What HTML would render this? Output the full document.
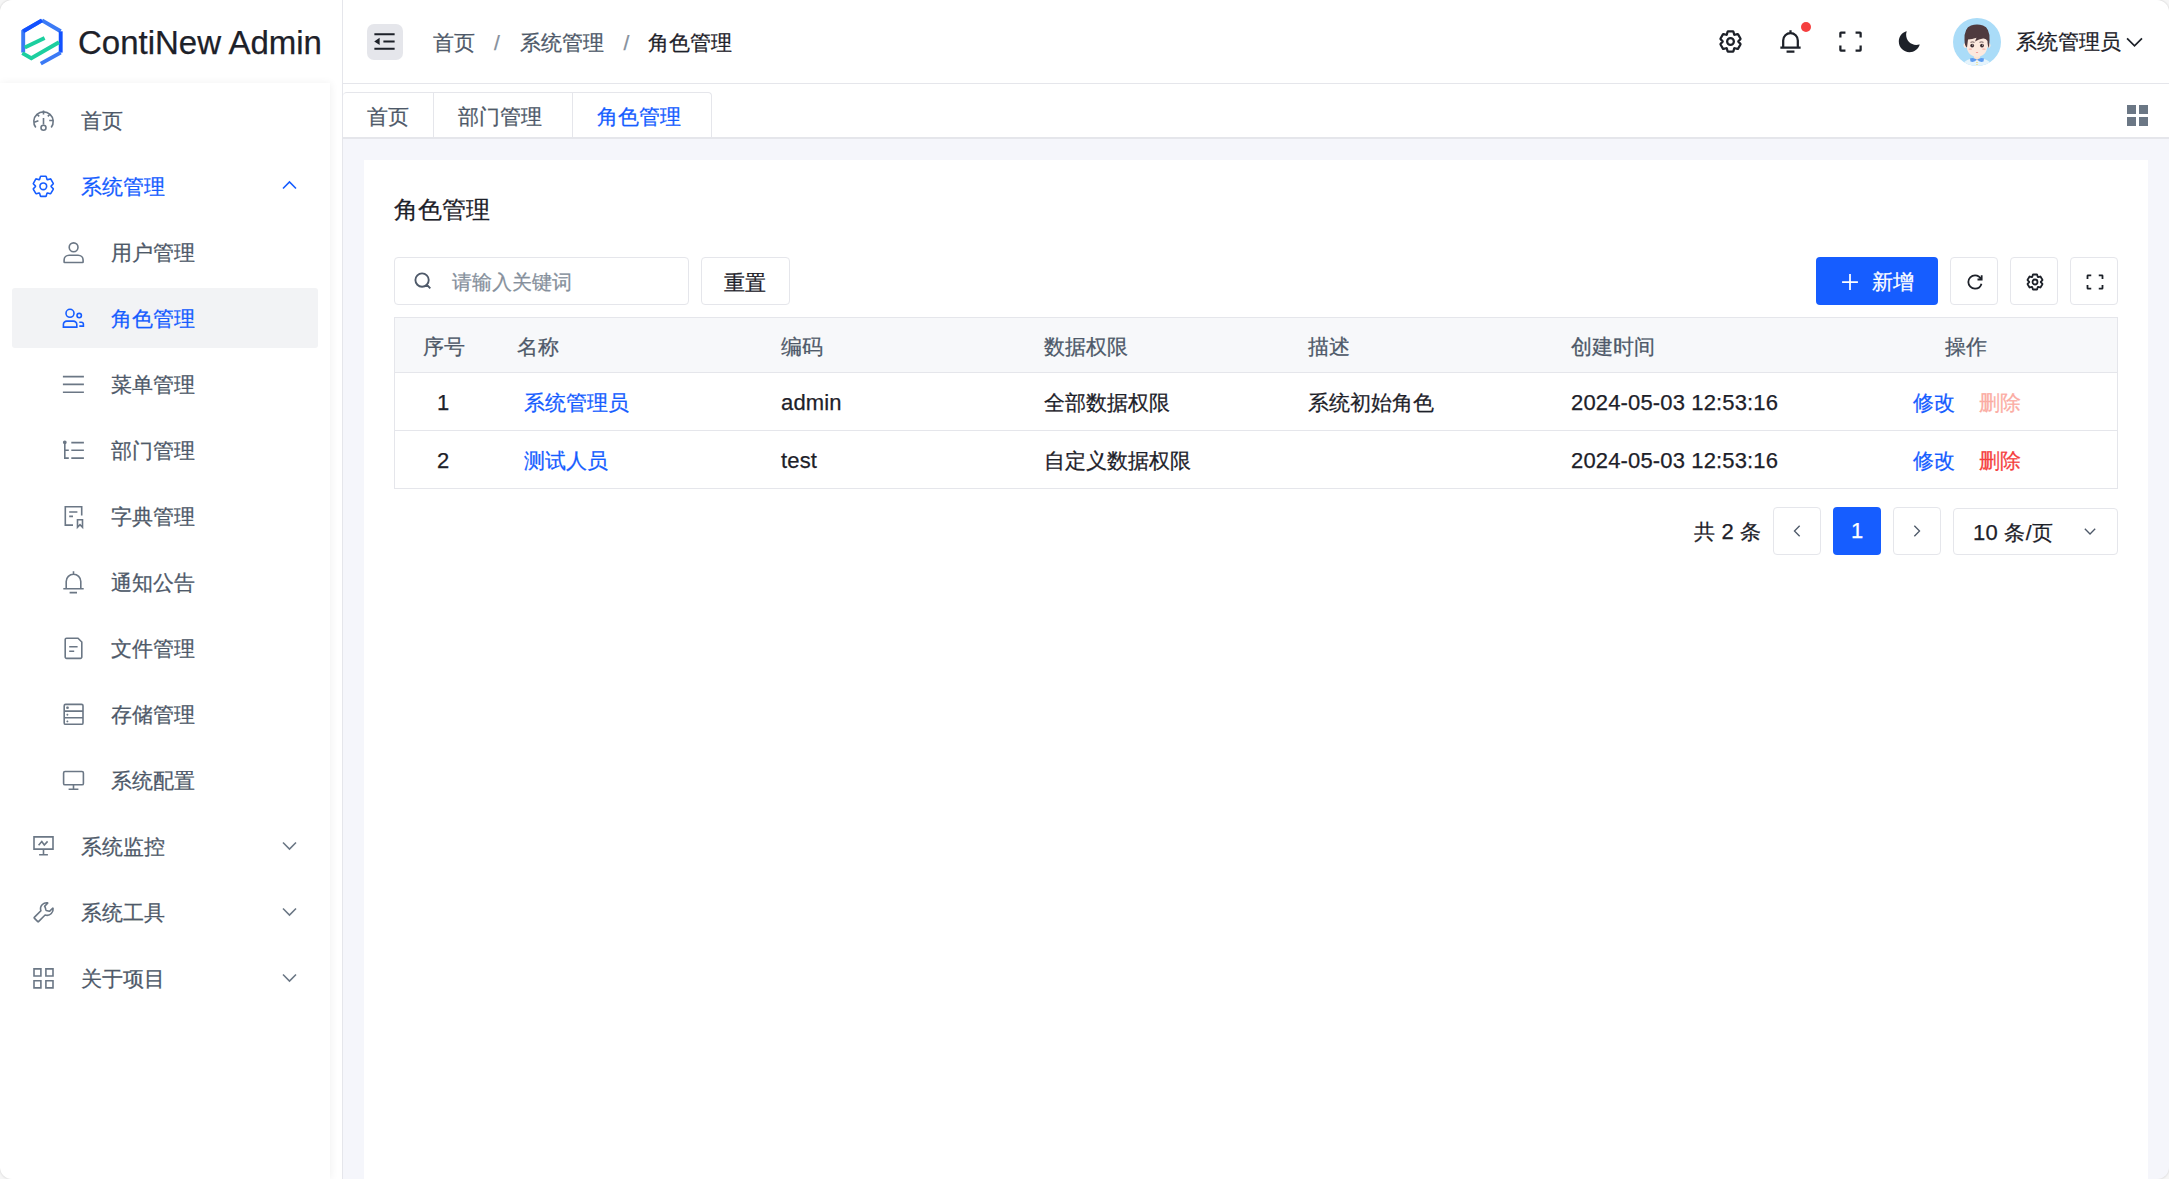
<!DOCTYPE html>
<html><head><meta charset="utf-8">
<style>
*{box-sizing:border-box;margin:0;padding:0}
html,body{width:2169px;height:1179px;overflow:hidden;background:#fff}
body{font-family:"Liberation Sans",sans-serif;font-size:21px;color:#1d2129;position:relative;-webkit-text-stroke:0.25px currentColor}
.abs{position:absolute}
svg{display:block}
.ic{fill:none;stroke:currentColor;stroke-width:4}
/* header */
#side{left:0;top:0;width:343px;height:1179px;background:#fff;border-right:1px solid #e5e6eb}
#sidemenu{left:0;top:83px;width:330px;height:1096px;background:#fff;box-shadow:1px 0 8px rgba(0,0,0,0.06)}
#logo-text{left:78px;top:20px;font-size:33px;line-height:46px;color:#1d2129;white-space:nowrap}
#hdr{left:343px;top:0;width:1826px;height:84px;border-bottom:1px solid #e5e6eb;background:#fff}
#fold{left:367px;top:24px;width:36px;height:36px;border-radius:7px;background:#e5e6eb;color:#1d2129}
.bc{top:28px;line-height:30px;white-space:nowrap;color:#4e5969}
.sep{color:#86909c}
/* tabs */
#tabs{left:343px;top:92px;width:1826px;height:47px;border-bottom:2px solid #e5e6eb;background:#fff}
.tab{top:92px;height:46px;border-top:1px solid #e5e6eb;border-right:1px solid #e5e6eb;line-height:48px;color:#4e5969;text-align:center}
#content{left:343px;top:139px;width:1826px;height:1040px;background:#f5f6fb}
#card{left:364px;top:160px;width:1784px;height:1100px;background:#fff}
.menu-item{left:12px;width:306px;height:60px;line-height:60px;color:#4e5969;white-space:nowrap}
.mt{line-height:30px;white-space:nowrap;color:#4e5969;font-size:21px}
.sel{background:#f2f3f5;border-radius:3px;color:#165dff}
.td.blue,.blue{color:#165dff}
.btn{border:1px solid #e5e6eb;border-radius:4px;background:#fff}
.th{top:333px;line-height:28px;color:#4e5969;white-space:nowrap}
.td{line-height:28px;color:#1d2129;white-space:nowrap}
.lat{font-size:22px;letter-spacing:0.15px}
#frame{position:absolute;left:0;top:0;width:2169px;height:1179px;border-radius:12px;box-shadow:0 0 1.5px 1px rgba(0,0,0,0.08),0 0 0 40px #f6f6f6;pointer-events:none;z-index:10}
</style></head><body>
<!-- sidebar -->
<div id="side" class="abs"></div>
<div id="sidemenu" class="abs"></div>
<svg class="abs" style="left:0;top:0" width="80" height="80" viewBox="0 0 80 80">
  <g fill="none" stroke-width="3.9" stroke-linejoin="miter">
  <path d="M23.2 52.6 V31.3 L42 20.4" stroke="#3b7af5"/>
  <path d="M42 20.4 L60.7 31.3" stroke="#3b7af5"/>
  <path d="M23.2 31.3 L42 20.4" stroke="#1251ff"/>
  <path d="M60.7 31.3 V52.6" stroke="#1251ff"/>
  <path d="M60.7 52.6 L40.8 63.6" stroke="#3b7af5"/>
  <path d="M22.3 53.1 L31.3 58.2 L59 42.3" stroke="#1ccf9f"/>
  <path d="M24.8 47.6 L44.6 37.9" stroke="#1ccf9f"/>
  </g>
</svg>
<div id="logo-text" class="abs">ContiNew Admin</div>

<!-- header -->
<div id="hdr" class="abs"></div>
<div id="fold" class="abs">
  <svg class="abs" style="left:4px;top:3.5px" width="27" height="27" viewBox="0 0 48 48"><path class="ic" style="stroke-width:3.4" d="M42 11H6M42 24H22M42 37H6"/><path d="M13.66 26.912l-4.82-3.118 4.82-3.118v6.236Z" fill="currentColor" stroke="currentColor" stroke-width="3.4"/></svg>
</div>
<div class="abs bc" style="left:433px">首页</div>
<div class="abs bc sep" style="left:494px">/</div>
<div class="abs bc" style="left:520px">系统管理</div>
<div class="abs bc sep" style="left:623.5px">/</div>
<div class="abs bc" style="left:648px;color:#1d2129">角色管理</div>

<!-- header right icons -->
<svg class="abs" style="left:1717px;top:28px;color:#1d2129" width="27" height="27" viewBox="0 0 48 48"><path class="ic" d="M18.797 6.732A1 1 0 0 1 19.76 6h8.48a1 1 0 0 1 .964.732l1.285 4.628a1 1 0 0 0 1.213.7l4.651-1.2a1 1 0 0 1 1.116.468l4.24 7.344a1 1 0 0 1-.153 1.2L38.193 23.3a1 1 0 0 0 0 1.402l3.364 3.427a1 1 0 0 1 .153 1.2l-4.24 7.344a1 1 0 0 1-1.116.468l-4.65-1.2a1 1 0 0 0-1.214.7l-1.285 4.628a1 1 0 0 1-.964.732h-8.48a1 1 0 0 1-.963-.732L17.51 36.64a1 1 0 0 0-1.213-.7l-4.65 1.2a1 1 0 0 1-1.116-.468l-4.24-7.344a1 1 0 0 1 .153-1.2L9.809 24.7a1 1 0 0 0 0-1.402l-3.364-3.427a1 1 0 0 1-.153-1.2l4.24-7.344a1 1 0 0 1 1.116-.468l4.65 1.2a1 1 0 0 0 1.213-.7l1.286-4.628Z"/><path class="ic" d="M30 24a6 6 0 1 1-12 0 6 6 0 0 1 12 0Z"/></svg>
<svg class="abs" style="left:1777px;top:28px;color:#1d2129" width="27" height="27" viewBox="0 0 48 48"><path class="ic" d="M24 9c7.18 0 13 5.82 13 13v13H11V22c0-7.18 5.82-13 13-13Zm0 0V4M6 35h36m-25 7h14"/></svg>
<div class="abs" style="left:1801px;top:22px;width:10px;height:10px;border-radius:5px;background:#f53f3f"></div>
<svg class="abs" style="left:1837px;top:28px;color:#1d2129" width="27" height="27" viewBox="0 0 48 48"><path class="ic" d="M42 17V9a1 1 0 0 0-1-1h-8M6 17V9a1 1 0 0 1 1-1h8m27 23v8a1 1 0 0 1-1 1h-8M6 31v8a1 1 0 0 0 1 1h8"/></svg>
<svg class="abs" style="left:1896px;top:28px;color:#1d2129" width="27" height="27" viewBox="0 0 48 48"><path fill="currentColor" d="M42.108 29.769c.124-.387-.258-.736-.645-.613A17.99 17.99 0 0 1 36 30c-9.941 0-18-8.059-18-18 0-1.904.296-3.74.844-5.463.123-.387-.226-.768-.613-.645C10.558 8.334 5 15.518 5 24c0 10.493 8.507 19 19 19 8.482 0 15.666-5.558 18.108-13.231Z"/></svg>
<!-- avatar -->
<svg class="abs" style="left:1953px;top:18px" width="48" height="48" viewBox="0 0 48 48">
  <defs><clipPath id="cc"><circle cx="24" cy="24" r="24"/></clipPath></defs>
  <circle cx="24" cy="24" r="24" fill="#aadcf8"/>
  <g clip-path="url(#cc)">
    <path d="M8 50 Q10 43 17 41 L31 41 Q38 43 40 50Z" fill="#e6f4fc"/>
    <path d="M21 38 L27 38 L27 41 L24 43 L21 41Z" fill="#fde3cf"/>
    <path d="M17 40.5 Q20 39 24 41.5 Q21 45 17.5 43.5Z M31 40.5 Q28 39 24 41.5 Q27 45 30.5 43.5Z" fill="#5d9cf0"/>
    <circle cx="24" cy="44.5" r="0.6" fill="#f5d040"/><circle cx="24" cy="46.5" r="0.6" fill="#f5d040"/>
    <ellipse cx="12.3" cy="27.5" rx="1.8" ry="2.4" fill="#fde9de"/>
    <ellipse cx="35.7" cy="27.5" rx="1.8" ry="2.4" fill="#fde9de"/>
    <path d="M13 17 L13 22 Q13 34 18 37 Q21 39 24 39 Q27 39 30 37 Q35 34 35 22 L35 17Z" fill="#fde9de"/>
    <path d="M11.5 22 Q11 10 18 7.5 Q24 5.5 30 7.5 Q37 10 36.5 22 L36 30 Q34.5 28 34.5 23 Q33 20 30 20.5 Q26 21 22 23.5 Q23 21 23.5 19.8 Q19 21.5 15 21.5 L14 29.5 Q11.5 28 11.5 22Z" fill="#4f3a3e"/>
    <path d="M17.5 24.3 Q19.5 23.5 21.5 24.3 M26.5 24.3 Q28.5 23.5 30.5 24.3" stroke="#4f3a3e" stroke-width="0.8" fill="none"/>
    <circle cx="19.2" cy="27.6" r="1.9" fill="#3d2c30"/><circle cx="29" cy="27.6" r="1.9" fill="#3d2c30"/>
    <circle cx="19.7" cy="27.1" r="0.5" fill="#fff"/><circle cx="29.5" cy="27.1" r="0.5" fill="#fff"/>
    <ellipse cx="17.3" cy="31.2" rx="1.7" ry="0.9" fill="#f6b8b0" opacity="0.8"/>
    <ellipse cx="30.9" cy="31.2" rx="1.7" ry="0.9" fill="#f6b8b0" opacity="0.8"/>
    <path d="M22.6 34.2 Q24 35.6 25.4 34.2Z" fill="#ee6a6a"/>
  </g>
</svg>
<div class="abs" style="left:2016px;top:27px;line-height:30px;color:#1d2129;white-space:nowrap">系统管理员</div>
<svg class="abs" style="left:2123px;top:30px;color:#1d2129" width="23" height="23" viewBox="0 0 48 48"><path class="ic" style="stroke-width:3.6" d="M39.6 17.443 24.043 33 8.487 17.443"/></svg>

<!-- tabs -->
<div id="tabs" class="abs"></div>
<div class="abs tab" style="left:343px;width:91px;border-top-left-radius:4px">首页</div>
<div class="abs tab" style="left:433px;width:140px;text-indent:-5px">部门管理</div>
<div class="abs tab" style="left:572px;width:140px;color:#165dff;text-indent:-6px;border-top-right-radius:4px">角色管理</div>
<svg class="abs" style="left:2127px;top:105px" width="21" height="21" viewBox="0 0 21 21"><g fill="#6b7785"><rect x="0" y="0" width="9" height="9"/><rect x="12" y="0" width="9" height="9"/><rect x="0" y="12" width="9" height="9"/><rect x="12" y="12" width="9" height="9"/></g></svg>

<!-- content -->
<div id="content" class="abs"></div>
<div id="card" class="abs"></div>
<div class="abs" style="left:394px;top:193px;font-size:24px;line-height:34px;color:#1d2129">角色管理</div>

<!-- toolbar -->
<div class="abs btn" style="left:394px;top:257px;width:295px;height:48px"></div>
<svg class="abs" style="left:413px;top:271px;color:#4e5969" width="20" height="20" viewBox="0 0 48 48"><path class="ic" style="stroke-width:4.5" d="M33.072 33.071c6.248-6.248 6.248-16.379 0-22.627-6.249-6.249-16.38-6.249-22.628 0-6.248 6.248-6.248 16.379 0 22.627 6.248 6.248 16.38 6.248 22.628 0Zm0 0 8.485 8.485"/></svg>
<div class="abs" style="left:452px;top:267px;line-height:30px;color:#86909c;font-size:19.6px">请输入关键词</div>
<div class="abs btn" style="left:701px;top:257px;width:89px;height:48px"></div>
<div class="abs" style="left:724px;top:268px;line-height:30px;color:#1d2129">重置</div>

<div class="abs" style="left:1816px;top:257px;width:122px;height:48px;background:#165dff;border-radius:4px"></div>
<svg class="abs" style="left:1840px;top:272px;color:#fff" width="20" height="20" viewBox="0 0 48 48"><path class="ic" style="stroke-width:4.2" d="M5 24h38M24 5v38"/></svg>
<div class="abs" style="left:1872px;top:267px;line-height:30px;color:#fff">新增</div>
<div class="abs btn" style="left:1950px;top:257px;width:48px;height:48px"></div>
<svg class="abs" style="left:1965px;top:272px;color:#1d2129" width="20" height="20" viewBox="0 0 48 48"><path class="ic" style="stroke-width:4.3" d="M38.837 18C36.463 12.136 30.715 8 24 8 15.163 8 8 15.163 8 24s7.163 16 16 16c7.455 0 13.72-5.1 15.496-12M40 8v10H30"/></svg>
<div class="abs btn" style="left:2010px;top:257px;width:48px;height:48px"></div>
<svg class="abs" style="left:2024.5px;top:272px;color:#1d2129" width="20" height="20" viewBox="0 0 48 48"><path class="ic" style="stroke-width:4.3" d="M18.797 6.732A1 1 0 0 1 19.76 6h8.48a1 1 0 0 1 .964.732l1.285 4.628a1 1 0 0 0 1.213.7l4.651-1.2a1 1 0 0 1 1.116.468l4.24 7.344a1 1 0 0 1-.153 1.2L38.193 23.3a1 1 0 0 0 0 1.402l3.364 3.427a1 1 0 0 1 .153 1.2l-4.24 7.344a1 1 0 0 1-1.116.468l-4.65-1.2a1 1 0 0 0-1.214.7l-1.285 4.628a1 1 0 0 1-.964.732h-8.48a1 1 0 0 1-.963-.732L17.51 36.64a1 1 0 0 0-1.213-.7l-4.65 1.2a1 1 0 0 1-1.116-.468l-4.24-7.344a1 1 0 0 1 .153-1.2L9.809 24.7a1 1 0 0 0 0-1.402l-3.364-3.427a1 1 0 0 1-.153-1.2l4.24-7.344a1 1 0 0 1 1.116-.468l4.65 1.2a1 1 0 0 0 1.213-.7l1.286-4.628Z"/><path class="ic" style="stroke-width:4.3" d="M30 24a6 6 0 1 1-12 0 6 6 0 0 1 12 0Z"/></svg>
<div class="abs btn" style="left:2070px;top:257px;width:48px;height:48px"></div>
<svg class="abs" style="left:2084.5px;top:271.5px;color:#1d2129" width="20" height="20" viewBox="0 0 48 48"><path class="ic" style="stroke-width:4.3" d="M42 17V9a1 1 0 0 0-1-1h-8M6 17V9a1 1 0 0 1 1-1h8m27 23v8a1 1 0 0 1-1 1h-8M6 31v8a1 1 0 0 0 1 1h8"/></svg>

<!-- table -->
<div class="abs" style="left:394px;top:317px;width:1724px;height:172px;border:1px solid #e5e6eb;background:#fff"></div>
<div class="abs" style="left:395px;top:318px;width:1722px;height:55px;background:#f7f8fa;border-bottom:1px solid #e5e6eb"></div>
<div class="abs" style="left:395px;top:430px;width:1722px;height:1px;background:#e5e6eb"></div>
<div class="abs th" style="left:423px">序号</div>
<div class="abs th" style="left:517px">名称</div>
<div class="abs th" style="left:781px">编码</div>
<div class="abs th" style="left:1044px">数据权限</div>
<div class="abs th" style="left:1308px">描述</div>
<div class="abs th" style="left:1571px">创建时间</div>
<div class="abs th" style="left:1945px">操作</div>

<div class="abs td lat" style="left:437px;top:389px">1</div>
<div class="abs td blue" style="left:524px;top:389px">系统管理员</div>
<div class="abs td lat" style="left:781px;top:389px">admin</div>
<div class="abs td" style="left:1044px;top:389px">全部数据权限</div>
<div class="abs td" style="left:1308px;top:389px">系统初始角色</div>
<div class="abs td lat" style="left:1571px;top:389px">2024-05-03 12:53:16</div>
<div class="abs td blue" style="left:1913px;top:389px">修改</div>
<div class="abs td" style="left:1979px;top:389px;color:#fbaca3">删除</div>

<div class="abs td lat" style="left:437px;top:447px">2</div>
<div class="abs td blue" style="left:524px;top:447px">测试人员</div>
<div class="abs td lat" style="left:781px;top:447px">test</div>
<div class="abs td" style="left:1044px;top:447px">自定义数据权限</div>
<div class="abs td lat" style="left:1571px;top:447px">2024-05-03 12:53:16</div>
<div class="abs td blue" style="left:1913px;top:447px">修改</div>
<div class="abs td" style="left:1979px;top:447px;color:#f53f3f">删除</div>

<!-- pagination -->
<div class="abs td" style="left:1694px;top:518px;letter-spacing:0.3px">共 <span class="lat">2</span> 条</div>
<div class="abs btn" style="left:1773px;top:507px;width:48px;height:48px"></div>
<svg class="abs" style="left:1789px;top:523px;color:#4e5969" width="16" height="16" viewBox="0 0 48 48"><path class="ic" d="M32 8.4 16.444 23.956 32 39.513"/></svg>
<div class="abs" style="left:1833px;top:507px;width:48px;height:48px;background:#165dff;border-radius:4px;color:#fff;text-align:center;line-height:48px;font-size:22px">1</div>
<div class="abs btn" style="left:1893px;top:507px;width:48px;height:48px"></div>
<svg class="abs" style="left:1909px;top:523px;color:#4e5969" width="16" height="16" viewBox="0 0 48 48"><path class="ic" d="m16 39.513 15.556-15.557L16 8.4"/></svg>
<div class="abs btn" style="left:1953px;top:508px;width:165px;height:47px"></div>
<div class="abs td" style="left:1973px;top:518.5px;letter-spacing:0.6px"><span class="lat">10</span> 条/页</div>
<svg class="abs" style="left:2082px;top:523px;color:#4e5969" width="16" height="16" viewBox="0 0 48 48"><path class="ic" d="M39.6 17.443 24.043 33 8.487 17.443"/></svg>

<!-- sidebar menu -->
<div class="abs menu-item" style="top:90px"></div>
<svg class="abs" style="left:25px;top:100px;color:#6b7785" width="40" height="40" viewBox="0 0 40 40"><g fill="none" stroke="currentColor" stroke-width="1.6"><path d="M10.8 27.5 A9.7 9.7 0 1 1 26.2 27.5"/><path d="M18.5 10.6V14.5M12 14.2l2.2 2.2M25 14.2l-2.2 2.2M9.2 22.2l4.2-1.4M24.2 20.5h4.1M18.5 18v6.5"/><circle cx="18.5" cy="27.8" r="2.5"/></g></svg>
<div class="abs mt" style="left:81px;top:106px;">首页</div>
<div class="abs menu-item" style="top:156px;color:#165dff"></div>
<svg class="abs" style="left:25px;top:166px;color:#165dff" width="40" height="40" viewBox="0 0 40 40"><g fill="none" stroke="currentColor" stroke-width="1.6"><g transform="translate(18.3 20.3) scale(0.56) translate(-24 -24)"><path stroke-width="2.85" d="M18.797 6.732A1 1 0 0 1 19.76 6h8.48a1 1 0 0 1 .964.732l1.285 4.628a1 1 0 0 0 1.213.7l4.651-1.2a1 1 0 0 1 1.116.468l4.24 7.344a1 1 0 0 1-.153 1.2L38.193 23.3a1 1 0 0 0 0 1.402l3.364 3.427a1 1 0 0 1 .153 1.2l-4.24 7.344a1 1 0 0 1-1.116.468l-4.65-1.2a1 1 0 0 0-1.214.7l-1.285 4.628a1 1 0 0 1-.964.732h-8.48a1 1 0 0 1-.963-.732L17.51 36.64a1 1 0 0 0-1.213-.7l-4.65 1.2a1 1 0 0 1-1.116-.468l-4.24-7.344a1 1 0 0 1 .153-1.2L9.809 24.7a1 1 0 0 0 0-1.402l-3.364-3.427a1 1 0 0 1-.153-1.2l4.24-7.344a1 1 0 0 1 1.116-.468l4.65 1.2a1 1 0 0 0 1.213-.7l1.286-4.628Z"/><path stroke-width="2.85" d="M30 24a6 6 0 1 1-12 0 6 6 0 0 1 12 0Z"/></g></g></svg>
<div class="abs mt" style="left:81px;top:172px;color:#165dff">系统管理</div>
<div class="abs" style="left:0;top:0;color:#165dff"><svg class="abs" style="left:0;top:0" width="320" height="1179"><path d="M283 188.5 L289.5 182.0 L296 188.5" fill="none" stroke="currentColor" stroke-width="1.6"/></svg>
</div>
<div class="abs menu-item" style="top:222px"></div>
<svg class="abs" style="left:55px;top:232px;color:#6b7785" width="40" height="40" viewBox="0 0 40 40"><g fill="none" stroke="currentColor" stroke-width="1.6"><circle cx="18.6" cy="15.3" r="4.4"/><path d="M9.1 30v-1.9c0-2.7 2.2-4.8 5-4.8h9c2.8 0 5 2.1 5 4.8v1.9a.5.5 0 0 1-.5.5H9.6a.5.5 0 0 1-.5-.5Z"/></g></svg>
<div class="abs mt" style="left:111px;top:238px;">用户管理</div>
<div class="abs menu-item sel" style="top:288px;color:#165dff"></div>
<svg class="abs" style="left:55px;top:298px;color:#165dff" width="40" height="40" viewBox="0 0 40 40"><g fill="none" stroke="currentColor" stroke-width="1.6"><circle cx="15" cy="15.3" r="4"/><circle cx="24.2" cy="17.6" r="2.2"/><path d="M8.4 29.1V26.5a3.4 3.4 0 0 1 3.4-3.4h6.6a3.4 3.4 0 0 1 3.4 3.4V29.1Z M24.3 24.2h2a2.1 2.1 0 0 1 2.1 2.1V28.1H24.3"/></g></svg>
<div class="abs mt" style="left:111px;top:304px;color:#165dff">角色管理</div>
<div class="abs menu-item" style="top:354px"></div>
<svg class="abs" style="left:55px;top:364px;color:#6b7785" width="40" height="40" viewBox="0 0 40 40"><g fill="none" stroke="currentColor" stroke-width="1.6"><path d="M7.9 12.6h21M7.9 20.4h21M7.9 28.3h21"/></g></svg>
<div class="abs mt" style="left:111px;top:370px;">菜单管理</div>
<div class="abs menu-item" style="top:420px"></div>
<svg class="abs" style="left:55px;top:430px;color:#6b7785" width="40" height="40" viewBox="0 0 40 40"><g fill="none" stroke="currentColor" stroke-width="1.6"><path d="M9.8 12.5v16.4M9.8 20.3h4M9.8 28.1h4M16.3 12.6h12.6M16.3 20.3h12.6M16.3 28.1h12.6"/><circle cx="9.8" cy="12.3" r="1.1" fill="currentColor"/></g></svg>
<div class="abs mt" style="left:111px;top:436px;">部门管理</div>
<div class="abs menu-item" style="top:486px"></div>
<svg class="abs" style="left:55px;top:496px;color:#6b7785" width="40" height="40" viewBox="0 0 40 40"><g fill="none" stroke="currentColor" stroke-width="1.6"><path d="M18 29.1H10.3V10.8H26.7V19.4M14.2 16H22.4M14.2 20.4H18M22.5 23.7H27.5V31.2L25 28.7L22.5 31.2Z"/></g></svg>
<div class="abs mt" style="left:111px;top:502px;">字典管理</div>
<div class="abs menu-item" style="top:552px"></div>
<svg class="abs" style="left:55px;top:562px;color:#6b7785" width="40" height="40" viewBox="0 0 40 40"><g fill="none" stroke="currentColor" stroke-width="1.6"><path d="M11.2 26.7V19.5A7.3 7.3 0 0 1 25.8 19.5V26.7M8.3 26.7H28.7M18.5 9.2V12.2M14.6 30.6H22"/></g></svg>
<div class="abs mt" style="left:111px;top:568px;">通知公告</div>
<div class="abs menu-item" style="top:618px"></div>
<svg class="abs" style="left:55px;top:628px;color:#6b7785" width="40" height="40" viewBox="0 0 40 40"><g fill="none" stroke="currentColor" stroke-width="1.6"><path d="M10.2 11.6a1.4 1.4 0 0 1 1.4-1.4H23l3.8 3.8V29a1.4 1.4 0 0 1-1.4 1.4H11.6A1.4 1.4 0 0 1 10.2 29Z M14.2 18.7H22.6 M14.2 23.2H19.2"/></g></svg>
<div class="abs mt" style="left:111px;top:634px;">文件管理</div>
<div class="abs menu-item" style="top:684px"></div>
<svg class="abs" style="left:55px;top:694px;color:#6b7785" width="40" height="40" viewBox="0 0 40 40"><g fill="none" stroke="currentColor" stroke-width="1.6"><rect x="9.2" y="10.4" width="18.8" height="19.9" rx="1.4"/><path d="M9.2 17.1H28M9.2 23.7H28"/><path d="M11.7 12.9h1.6v1.6h-1.6zM11.9 20.2h1v1h-1zM11.9 26.9h1v1h-1z" fill="currentColor" stroke-width="0.8"/></g></svg>
<div class="abs mt" style="left:111px;top:700px;">存储管理</div>
<div class="abs menu-item" style="top:750px"></div>
<svg class="abs" style="left:55px;top:760px;color:#6b7785" width="40" height="40" viewBox="0 0 40 40"><g fill="none" stroke="currentColor" stroke-width="1.6"><rect x="8.6" y="11.5" width="19.8" height="13.3" rx="1.4"/><path d="M18.5 24.8V29.3M13.6 29.3H23.4"/></g></svg>
<div class="abs mt" style="left:111px;top:766px;">系统配置</div>
<div class="abs menu-item" style="top:816px"></div>
<svg class="abs" style="left:25px;top:826px;color:#6b7785" width="40" height="40" viewBox="0 0 40 40"><g fill="none" stroke="currentColor" stroke-width="1.6"><path d="M9 10.9H28V23.1H9Z M18.5 23.1V28.8 M14.1 28.8H22.9 M13.6 19.3L16.8 15.6L19.3 19L22.6 15.4"/></g></svg>
<div class="abs mt" style="left:81px;top:832px;">系统监控</div>
<div class="abs" style="left:0;top:0;color:#6b7785"><svg class="abs" style="left:0;top:0" width="320" height="1179"><path d="M283 842.5 L289.5 849.0 L296 842.5" fill="none" stroke="currentColor" stroke-width="1.6"/></svg>
</div>
<div class="abs menu-item" style="top:882px"></div>
<svg class="abs" style="left:25px;top:892px;color:#6b7785" width="40" height="40" viewBox="0 0 40 40"><g fill="none" stroke="currentColor" stroke-width="1.6"><g transform="translate(18.5 20.4) scale(0.52) translate(-24 -24)"><path stroke-width="3.1" d="M26.2 12.8c-.1-.3 0-.6.2-.8l5.6-5.6c.3-.3.1-.7-.3-.8-3.5-.5-7.2.6-9.9 3.3-3.3 3.3-4.2 8-2.9 12.1L6.3 33.6a1 1 0 0 0 0 1.4l6.7 6.7a1 1 0 0 0 1.4 0l12.6-12.6c4.1 1.3 8.8.4 12.1-2.9 2.7-2.7 3.8-6.4 3.3-9.9-.1-.4-.5-.6-.8-.3l-5.6 5.6c-.2.2-.5.3-.8.2l-5.9-1.6c-.3-.1-.5-.3-.6-.6l-1.5-5.8Z"/></g></g></svg>
<div class="abs mt" style="left:81px;top:898px;">系统工具</div>
<div class="abs" style="left:0;top:0;color:#6b7785"><svg class="abs" style="left:0;top:0" width="320" height="1179"><path d="M283 908.5 L289.5 915.0 L296 908.5" fill="none" stroke="currentColor" stroke-width="1.6"/></svg>
</div>
<div class="abs menu-item" style="top:948px"></div>
<svg class="abs" style="left:25px;top:958px;color:#6b7785" width="40" height="40" viewBox="0 0 40 40"><g fill="none" stroke="currentColor" stroke-width="1.6"><path d="M9 10.9h6.9v7.1H9zM20.9 10.9h7.1v7.1h-7.1zM9 22.7h6.9v7.2H9zM20.9 22.7h7.1v7.2h-7.1z"/></g></svg>
<div class="abs mt" style="left:81px;top:964px;">关于项目</div>
<div class="abs" style="left:0;top:0;color:#6b7785"><svg class="abs" style="left:0;top:0" width="320" height="1179"><path d="M283 974.5 L289.5 981.0 L296 974.5" fill="none" stroke="currentColor" stroke-width="1.6"/></svg>
</div>

<div id="frame"></div>
</body></html>
